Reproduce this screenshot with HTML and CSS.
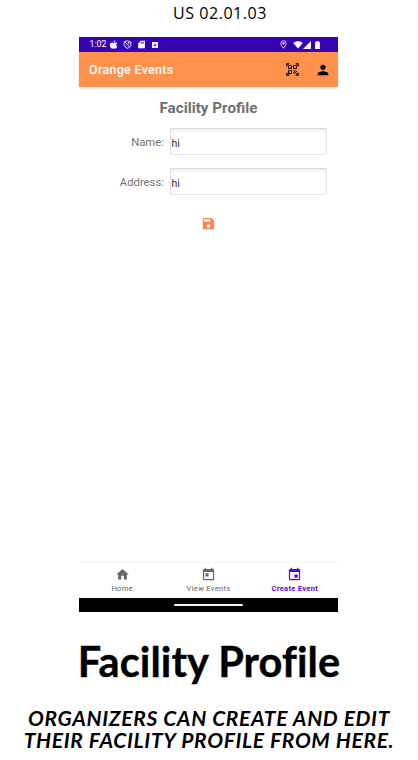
FILE: index.html
```html
<!DOCTYPE html>
<html lang="en">
<head>
<meta charset="utf-8">
<title>Facility Profile</title>
<link rel="stylesheet" href="styles.css">
</head>
<body>
<p class="story">US 02.01.03</p>
<main class="phone">
  <div class="status">
    <span class="time">1:02</span>
    <svg class="s-apple" viewBox="0 0 24 24"><path d="M17 1c0 3-2 5-5 5 0-3 2-5 5-5zM22 17c-2 5-4 6-6 6-1 0-2-1-3-1s-2 1-3 1c-4 0-8-6-8-10 0-5 5-7 8-6l2 1 3-1c3-1 6 0 7 2-4 2-4 6 0 8z"/></svg>
    <svg class="s-shield" viewBox="0 0 24 24"><path d="M12 2 3 5v7c0 5 4 8 9 10 5-2 9-5 9-10V5zM5 5l13 14" fill="none" stroke="#fff" stroke-width="2.4"/><path d="M12 6h5v7z"/></svg>
    <svg class="s-card" viewBox="0 0 24 24"><path fill-rule="evenodd" d="M10 2h11v20H3V9zm0 3v4h2V5zm3 0v4h2V5zm3 0v4h2V5z"/></svg>
    <svg class="s-app" viewBox="0 0 24 24"><path fill-rule="evenodd" d="M3 3h18v18H3zm9 3-5 10h2l1-2h4l1 2h2zm0 4 1 2h-2zM7 18v1h10v-1z"/></svg>
    <span class="spacer"></span>
    <svg class="s-pin" viewBox="0 0 24 24"><path d="M12 22c-4-5-7-9-7-13a7 7 0 0 1 14 0c0 4-3 8-7 13z" fill="none" stroke="#fff" stroke-width="2.3"/><circle cx="12" cy="9" r="3"/></svg>
    <svg class="s-wifi" viewBox="0 0 24 20"><path d="M0 5C7-1 17-1 24 5L12 19z"/></svg>
    <svg class="s-signal" viewBox="0 0 20 20"><path d="M20 0v20H0z"/></svg>
    <svg class="s-battery" viewBox="0 0 12 20"><path d="M4 0h4v2h4v18H0V2h4z"/></svg>
  </div>
  <header class="appbar">
    <h1>Orange Events</h1>
    <svg class="qr" viewBox="0 0 24 24"><path d="M9.5 6.500v3h-3v-3h3M11 5H5v6h6V5zm-1.500 9.500v3h-3v-3h3M11 13H5v6h6v-6zm6.500-6.500v3h-3v-3h3M19 5h-6v6h6V5zm-6 8h1.500v1.500H13V13zm1.500 1.500H16V16h-1.500v-1.500zM16 13h1.500v1.500H16V13zm-3 3h1.500v1.500H13V16zm1.500 1.500H16V19h-1.500v-1.500zM16 16h1.500v1.500H16V16zm1.500-1.500H19V16h-1.500v-1.500zm0 3H19V19h-1.500v-1.500zM22 7h-2V4h-3V2h5v5zm0 15v-5h-2v3h-3v2h5zM2 22h5v-2H4v-3H2v5zM2 2v5h2V4h3V2H2z"/></svg>
    <svg class="person" viewBox="0 0 24 24"><path d="M12 12c2.210 0 4-1.790 4-4s-1.790-4-4-4-4 1.790-4 4 1.790 4 4 4zm0 2c-2.670 0-8 1.340-8 4v2h16v-2c0-2.660-5.330-4-8-4z"/></svg>
  </header>
  <section class="content">
    <h2>Facility Profile</h2>
    <div class="row"><span class="label">Name:</span><span class="field">hi</span></div>
    <div class="row"><span class="label">Address:</span><span class="field">hi</span></div>
    <svg class="save" viewBox="0 0 24 24"><path d="M17 3H5a2 2 0 0 0-2 2v14c0 1.100.9 2 2 2h14c1.100 0 2-.9 2-2V7l-4-4zm-5 16c-1.660 0-3-1.340-3-3s1.340-3 3-3 3 1.340 3 3-1.340 3-3 3zm3-10H5V5h10v4z"/></svg>
  </section>
  <nav class="tabs">
    <div class="tab"><svg viewBox="0 0 24 24"><path d="M10 20v-6h4v6h5v-8h3L12 3 2 12h3v8z"/></svg><span>Home</span></div>
    <div class="tab"><svg viewBox="0 0 24 24"><path d="M19 3h-1V1h-2v2H8V1H6v2H5a2 2 0 0 0-2 2v14a2 2 0 0 0 2 2h14c1.100 0 2-.9 2-2V5c0-1.100-.9-2-2-2zm0 16H5V8h14v11zM7 10h5v5H7z"/></svg><span>View Events</span></div>
    <div class="tab active"><svg viewBox="0 0 24 24"><path d="M17 12h-5v5h5v-5zM16 1v2H8V1H6v2H5a2 2 0 0 0-2 2v14a2 2 0 0 0 2 2h14c1.100 0 2-.9 2-2V5c0-1.100-.9-2-2-2h-1V1h-2zm3 18H5V8h14v11z"/></svg><span>Create Event</span></div>
  </nav>
  <div class="gesture"><span></span></div>
</main>
<p class="headline">Facility Profile</p>
<p class="caption">ORGANIZERS CAN CREATE AND EDIT<br>THEIR FACILITY PROFILE FROM HERE.</p>
</body>
</html>
```
FILE: styles.css
```css
* { box-sizing: border-box; }
body { margin: 0; height: 760px; overflow: hidden; background: #fff; color: #000; font-family: Roboto, sans-serif; }
p, h1, h2 { margin: 0; }
svg { display: block; flex: none; fill: currentColor; }
.story { height: 37px; padding-left: 22px; text-align: center; font: 16px/27px "Open Sans", sans-serif; letter-spacing: .55px; }
.phone { width: 259px; height: 575px; margin-left: 79px; display: flex; flex-direction: column; }
.status { height: 15px; background: #3700b3; color: #fff; display: flex; align-items: center; padding: 0 18px 0 10.500px; }
.time { font-size: 8.800px; line-height: 15px; width: 19.500px; white-space: nowrap; }
.s-apple { width: 9px; height: 9px; }
.s-shield { width: 9px; height: 9px; margin-left: 5px; }
.s-card { width: 9px; height: 9px; margin-left: 5px; }
.s-app { width: 8px; height: 8px; margin-left: 5px; }
.spacer { flex: 1; }
.s-pin { width: 9px; height: 9px; margin-right: 5px; }
.s-wifi { width: 10px; height: 8px; }
.s-signal { width: 8px; height: 8px; margin-right: 4px; }
.s-battery { width: 5px; height: 8px; }
.appbar { height: 35px; background: #ff914d; display: flex; align-items: center; padding: 0 7px 0 10px; box-shadow: 0 1px 2px #0002; }
.appbar h1 { flex: 1; color: #fff; font-size: 12.500px; font-weight: 500; line-height: 36px; letter-spacing: .3px; }
.qr { width: 15px; height: 15px; margin-right: 15px; }
.person { width: 16px; height: 16px; }
.content { flex: 1; display: flex; flex-direction: column; }
h2 { color: #707070; font-size: 15.200px; line-height: 22px; font-weight: 700; margin: 10px 0 9px; text-align: center; }
.row { display: flex; height: 27px; margin-bottom: 13px; }
.label { width: 85px; margin-right: 5.500px; text-align: right; color: #757575; font-size: 11.300px; line-height: 30px; }
.field { width: 157.500px; padding-left: 1px; font-size: 10.500px; line-height: 29px; color: #333; border: 1px solid #e8e8e8; border-top-color: #dcdcdc; border-left-color: #e0e0e0; box-shadow: inset 0 2px 3px #00000010; }
.save { width: 15px; height: 15px; color: #ff8445; margin: 8px auto 0 122px; }
.tabs { height: 36px; border-top: 1px solid #f3f3f3; display: flex; color: #666; }
.tab { flex: 1; display: flex; flex-direction: column; align-items: center; padding-top: 4px; }
.tab svg { width: 15px; height: 15px; }
.tab span { font-size: 7.500px; line-height: 10px; margin-top: 2px; letter-spacing: .32px; white-space: nowrap; }
.tab.active { color: #6200ee; }
.tab.active span { font-weight: 700; }
.gesture { height: 14px; background: #000; display: flex; justify-content: center; align-items: center; }
.gesture span { width: 69px; height: 2px; border-radius: 1px; background: #f5f5f5; }
.headline { margin-top: 24px; text-align: center; font: 700 41.500px/50px Lato, sans-serif; letter-spacing: .1px; font-variant-ligatures: none; -webkit-text-stroke: .4px #000; white-space: nowrap; }
.caption { margin-top: 21px; text-align: center; font: italic 700 21px/22px Lato, sans-serif; letter-spacing: .66px; white-space: nowrap; }
```
